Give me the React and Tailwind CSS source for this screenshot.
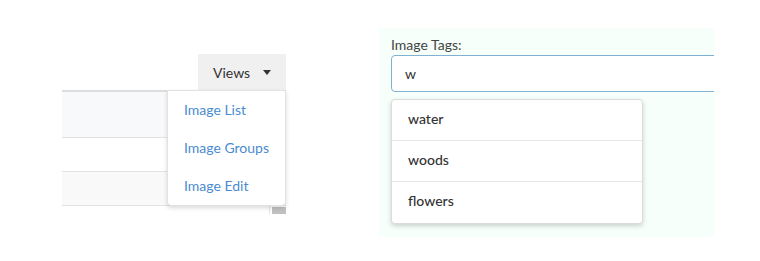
const font = { fontFamily: "Lato, 'Open Sans', sans-serif" };

function ViewsMenu() {
    const items = ["Image List", "Image Groups", "Image Edit"];
    return (
        <div className="absolute left-[105px] top-[36px] w-[119px] bg-white border border-[#e2e2e2] rounded-b-[4px] shadow-[0_2px_4px_rgba(0,0,0,0.15)] flex flex-col">
            {items.map((item) => (
                <div
                    key={item}
                    className="h-[38px] shrink-0 flex items-center pl-[16px] pb-[2px] text-[14px] text-[#4a8bd0]"
                >
                    {item}
                </div>
            ))}
        </div>
    );
}

function LeftTable() {
    return (
        <div className="relative w-[224px] mt-[54px] ml-[62px]">
            <div className="flex justify-end">
                <div className="h-[36px] w-[88px] bg-[#f0f0f0] flex items-center pl-[15px] gap-[13px] text-[14px] text-[#333]">
                    <span>Views</span>
                    <svg width="8" height="5" viewBox="0 0 8 5">
                        <path d="M0 0 L8 0 L4 5 Z" fill="#333" />
                    </svg>
                </div>
            </div>
            <div className="border-t-2 border-[#dddddd]">
                <div className="h-[46px] bg-[#f8f9fb] border-b border-[#e2e2e2]" />
                <div className="h-[34px] bg-white border-b border-[#e2e2e2]" />
                <div className="h-[34px] bg-[#f9f9f9] border-b border-[#e2e2e2]" />
            </div>
            <div className="flex h-[8px]">
                <div className="w-[207px]" />
                <div className="w-[3px] border-l border-[#e5e5e5]" />
                <div className="w-[14px] mt-[1px] bg-[#c1c1c1]" />
            </div>
            <ViewsMenu />
        </div>
    );
}

function TagsPanel() {
    const tags = ["water", "woods", "flowers"];
    return (
        <div className="ml-[93px] mt-[28px] w-[335px] h-[209px] bg-[#f6fffa] pl-[12px] pt-[9px] overflow-hidden">
            <div className="text-[14px] leading-[16px] text-[#444] mb-[2px]">Image Tags:</div>
            <div className="relative">
                <div className="h-[37px] w-[360px] border border-[#7fb1d3] rounded-[4px] bg-white flex items-center pl-[13px] text-[14px] text-[#333]">
                    w
                </div>
                <div className="absolute left-0 top-[44px] w-[252px] bg-white border border-[#dcdcdc] rounded-[4px] shadow-[0_2px_5px_rgba(0,0,0,0.18)] flex flex-col">
                    {tags.map((tag, i) => (
                        <div
                            key={tag}
                            className={`h-[41px] flex items-center pl-[16px] pb-[4px] text-[14px] font-medium text-[#333] ${i < tags.length - 1 ? "border-b border-[#e6e6e6]" : ""}`}
                        >
                            {tag}
                        </div>
                    ))}
                </div>
            </div>
        </div>
    );
}

export default function App() {
    return (
        <div className="w-[760px] h-[261px] bg-white flex items-start" style={font}>
            <LeftTable />
            <TagsPanel />
        </div>
    );
}
